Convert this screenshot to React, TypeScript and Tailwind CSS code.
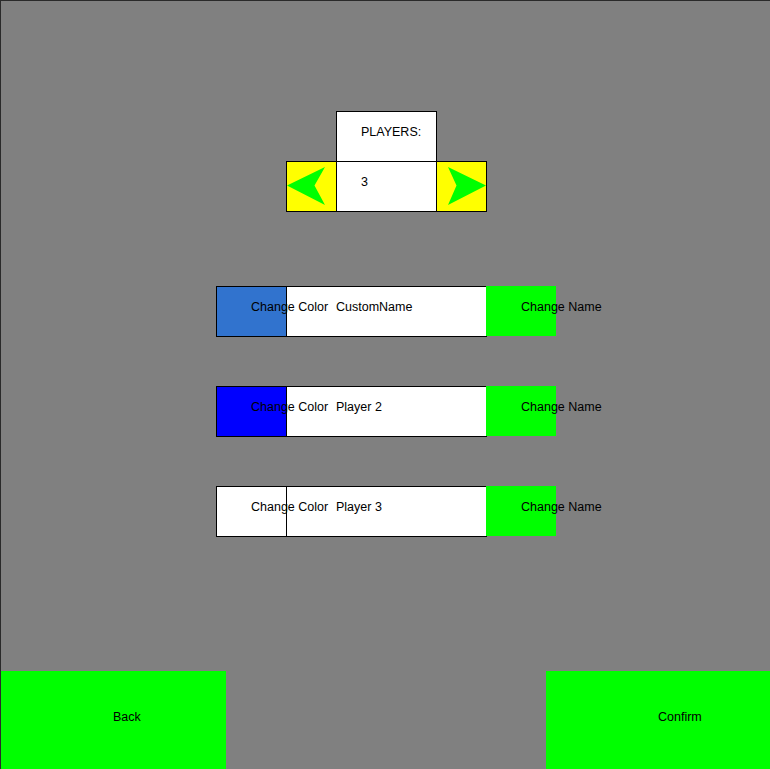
const font = { fontFamily: '"Liberation Sans", Arial, sans-serif' };

type Row = { swatch: string; name: string };

const rows: Row[] = [
  { swatch: "bg-[#3173ce]", name: "CustomName" },
  { swatch: "bg-[#0000ff]", name: "Player 2" },
  { swatch: "bg-white", name: "Player 3" },
];

const LeftArrow = () => (
  <svg width="49" height="49" viewBox="0 0 49 49" className="block overflow-visible">
    <polygon points="0,23.5 38,5 27.5,23.5 38,43" fill="#00ff00" />
  </svg>
);

const RightArrow = () => (
  <svg width="49" height="49" viewBox="0 0 49 49" className="block overflow-visible">
    <polygon points="11,5 49,23.5 11,43 19.5,23.5" fill="#00ff00" />
  </svg>
);

const PlayerRow = ({ swatch, name }: Row) => (
  <div className="flex">
    <div className={`h-[51px] w-[71px] border border-black ${swatch}`}>
      <span className="relative z-10 block whitespace-nowrap pl-[34px] pt-[13px] leading-[14px]">
        Change Color
      </span>
    </div>
    <div className="-ml-px h-[51px] w-[201px] border border-black bg-white">
      <span className="block whitespace-nowrap pl-[49px] pt-[13px] leading-[14px]">{name}</span>
    </div>
    <div className="-ml-px h-[50px] w-[70px] bg-[#00ff00]">
      <span className="relative z-10 block whitespace-nowrap pl-[35px] pt-[14px] leading-[14px]">
        Change Name
      </span>
    </div>
  </div>
);

export default function App() {
  return (
    <div
      style={font}
      className="flex h-[769px] w-[770px] flex-col overflow-hidden border-l border-t border-[#2a2a2a] bg-[#808080] text-[12.5px] text-black"
    >
      {/* player count selector */}
      <div className="ml-[335px] mt-[110px] h-[51px] w-[101px] border border-black bg-white">
        <span className="block pl-[24px] pt-[13px] leading-[14px]">PLAYERS:</span>
      </div>
      <div className="-mt-px ml-[285px] flex">
        <button type="button" className="h-[51px] w-[51px] border border-black bg-[#ffff00]">
          <LeftArrow />
        </button>
        <div className="-ml-px h-[51px] w-[101px] border border-black bg-white">
          <span className="block pl-[24px] pt-[13px] leading-[14px]">3</span>
        </div>
        <button type="button" className="-ml-px h-[51px] w-[51px] border border-black bg-[#ffff00]">
          <RightArrow />
        </button>
      </div>

      {/* players */}
      <div className="ml-[215px] mt-[74px] flex flex-col gap-[49px]">
        {rows.map((r) => (
          <PlayerRow key={r.name} {...r} />
        ))}
      </div>

      <div className="mt-auto flex justify-between">
        <button type="button" className="h-[98px] w-[225px] bg-[#00ff00] text-left">
          <span className="block h-full pl-[112px] pt-[39px] leading-[14px]">Back</span>
        </button>
        <button type="button" className="h-[98px] w-[224px] bg-[#00ff00] text-left">
          <span className="block h-full pl-[112px] pt-[39px] leading-[14px]">Confirm</span>
        </button>
      </div>
    </div>
  );
}
